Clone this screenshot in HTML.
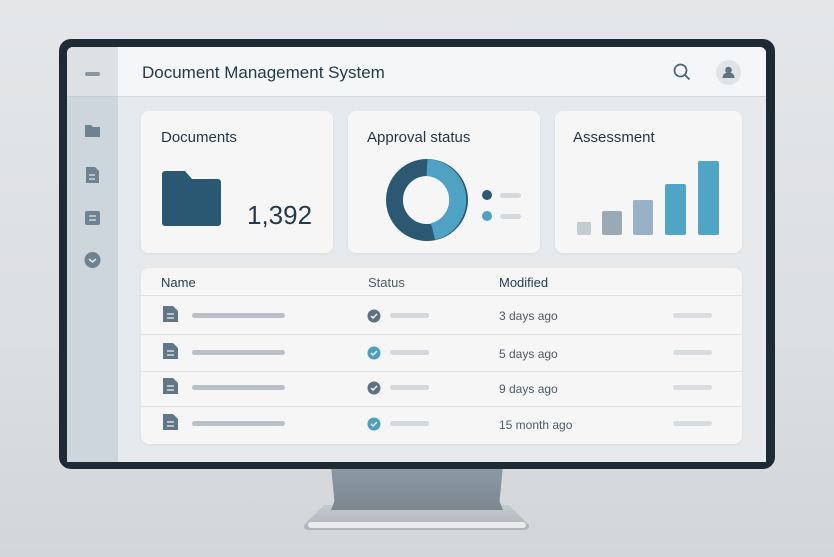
<!DOCTYPE html>
<html><head><meta charset="utf-8"><style>
*{margin:0;padding:0;box-sizing:border-box}
body{width:834px;height:557px;overflow:hidden;background:linear-gradient(180deg,#e4e6e8 0%,#dcdfe2 60%,#d3d6d9 100%);font-family:"Liberation Sans",sans-serif;position:relative}
.abs{position:absolute}
.bezel{left:59px;top:39px;width:716px;height:430px;background:#1e2b35;border-radius:12px}
.screen{left:67px;top:47px;width:699px;height:415px;background:#e7eaed;border-radius:6px 6px 0 0;overflow:hidden}
.side{left:0;top:0;width:51px;height:415px;background:#cdd6dc}
.sidetop{left:0;top:0;width:51px;height:50px;background:#dde1e4;border-bottom:1px solid #c7ced4}
.header{left:51px;top:0;width:648px;height:50px;background:#f5f6f7;border-bottom:1px solid #d3d8dc}
.card{background:#f6f6f7;border-radius:8px;box-shadow:0 1px 3px rgba(0,0,0,.06)}
.t{color:#1f3547;font-size:15px}
.row{left:0;width:601px;border-top:1px solid #dde2e6}
.bar{border-radius:3px;height:5px}
.txt{font-size:12px;color:#4a5a68}
</style></head><body>
<!-- stand -->
<div class="abs" style="left:304px;top:505px;width:225px;height:25px;background:linear-gradient(#c4c9ce,#aeb4ba);border-radius:10px 10px 4px 4px;clip-path:polygon(9% 0,91% 0,100% 80%,100% 100%,0 100%,0 80%)"></div>
<div class="abs" style="left:308px;top:522px;width:218px;height:6px;background:#e9ebed;border-radius:3px"></div>
<div class="abs" style="left:331px;top:466px;width:172px;height:44px;background:linear-gradient(#8f9ba4,#7a8791);clip-path:polygon(0 0,100% 0,98% 80%,100% 100%,0 100%,2% 80%)"></div>
<div class="abs bezel"></div>
<div class="abs screen">
 <div class="abs side"></div>
 <div class="abs sidetop"></div>
 <div class="abs" style="left:18px;top:25px;width:15px;height:4px;border-radius:2px;background:#8896a1"></div>
 <svg class="abs" style="left:17px;top:75px" width="18" height="200">
  <path d="M1 3h6l2 2h7v10H1z" fill="#6d8391"/>
  <path d="M2 45h9l4 4v12H2z" fill="#6d8391"/><path d="M5 53h6M5 57h6" stroke="#cdd6dc" stroke-width="1.4"/>
  <rect x="1" y="89" width="15" height="14" rx="2" fill="#6d8391"/><path d="M5 94h7M5 98h7" stroke="#cdd6dc" stroke-width="1.4"/>
  <circle cx="8.5" cy="138" r="8" fill="#6d8391"/><path d="M5 137l3.5 3 3.5-3" stroke="#dfe5e9" stroke-width="1.6" fill="none"/>
 </svg>
 <div class="abs header"></div>
 <div class="abs" style="left:75px;top:16px;font-size:17px;color:#223a4c">Document Management System</div>
 <svg class="abs" style="left:606px;top:16px" width="18" height="18"><circle cx="7.5" cy="7.5" r="6" stroke="#4b6474" stroke-width="1.7" fill="none"/><path d="M12 12l4.5 4.5" stroke="#4b6474" stroke-width="1.8"/></svg>
 <div class="abs" style="left:649px;top:13px;width:25px;height:25px;border-radius:50%;background:#e0e4e7"></div>
 <svg class="abs" style="left:649px;top:13px" width="25" height="25"><circle cx="12.5" cy="10" r="3.3" fill="#5e7483"/><path d="M6.5 18c0-4 2.7-5.5 6-5.5s6 1.5 6 5.5z" fill="#5e7483"/></svg>

 <div class="abs card" style="left:74px;top:64px;width:192px;height:142px"></div>
 <div class="abs t" style="left:94px;top:82px">Documents</div>
 <svg class="abs" style="left:95px;top:124px" width="60" height="56"><path d="M0 3a3 3 0 0 1 3-3h20l7 8h26a3 3 0 0 1 3 3v41a3 3 0 0 1-3 3H3a3 3 0 0 1-3-3z" fill="#2a5873"/></svg>
 <div class="abs" style="left:180px;top:153px;font-size:26px;color:#233a4b">1,392</div>

 <div class="abs card" style="left:281px;top:64px;width:192px;height:142px"></div>
 <div class="abs t" style="left:300px;top:82px">Approval status</div>
 <svg class="abs" style="left:316px;top:110px" width="90" height="90">
  <circle cx="44" cy="43" r="32.5" fill="none" stroke="#2c5873" stroke-width="17"/>
  <path d="M44 10.5A32.5 32.5 0 0 1 50 74.5" fill="none" stroke="#4ea2c3" stroke-width="17"/>
 </svg>
 <div class="abs" style="left:415px;top:143px;width:10px;height:10px;border-radius:50%;background:#2c5873"></div>
 <div class="abs bar" style="left:433px;top:146px;width:21px;background:#d4d9dd"></div>
 <div class="abs" style="left:415px;top:164px;width:10px;height:10px;border-radius:50%;background:#4ea2c3"></div>
 <div class="abs bar" style="left:433px;top:167px;width:21px;background:#d4d9dd"></div>

 <div class="abs card" style="left:488px;top:64px;width:187px;height:142px"></div>
 <div class="abs t" style="left:506px;top:82px">Assessment</div>
 <div class="abs" style="left:510px;top:175px;width:14px;height:13px;background:#c3ccd3;border-radius:2px"></div>
 <div class="abs" style="left:535px;top:164px;width:20px;height:24px;background:#9aa9b6;border-radius:2px"></div>
 <div class="abs" style="left:566px;top:153px;width:20px;height:35px;background:#98b1c4;border-radius:2px"></div>
 <div class="abs" style="left:598px;top:137px;width:21px;height:51px;background:#50a4c5;border-radius:2px"></div>
 <div class="abs" style="left:631px;top:114px;width:21px;height:74px;background:#50a4c5;border-radius:2px"></div>

 <div class="abs card" style="left:74px;top:221px;width:601px;height:176px">
  <div class="abs" style="left:20px;top:7px;font-size:13px;color:#1f3b50">Name</div>
  <div class="abs" style="left:227px;top:7px;font-size:13px;color:#4a5d6b">Status</div>
  <div class="abs" style="left:358px;top:7px;font-size:13px;color:#1f3b50">Modified</div>
  <div class="abs row" style="top:27px"></div>
  <div class="abs row" style="top:66px"></div>
  <div class="abs row" style="top:103px"></div>
  <div class="abs row" style="top:138px"></div>
 </div>
 <!-- rows -->
 <svg class="abs" style="left:96px;top:259px" width="16" height="160">
  <g fill="#5f7787"><path d="M0 0h10l5 5v11H0z"/><path d="M0 37h10l5 5v11H0z"/><path d="M0 72h10l5 5v11H0z"/><path d="M0 108h10l5 5v11H0z"/></g>
  <g stroke="#eef0f2" stroke-width="1.2"><path d="M4 8h7M4 12h7M4 45h7M4 49h7M4 80h7M4 84h7M4 116h7M4 120h7"/></g>
 </svg>
 <div class="abs bar" style="left:125px;top:266px;width:93px;background:#b9c0c7"></div>
 <div class="abs bar" style="left:125px;top:303px;width:93px;background:#b9c0c7"></div>
 <div class="abs bar" style="left:125px;top:338px;width:93px;background:#b9c0c7"></div>
 <div class="abs bar" style="left:125px;top:374px;width:93px;background:#b9c0c7"></div>
 <svg class="abs" style="left:300px;top:262px" width="14" height="130">
  <circle cx="7" cy="7" r="6.5" fill="#5e7180"/><circle cx="7" cy="44" r="6.5" fill="#4a9fc3"/><circle cx="7" cy="79" r="6.5" fill="#5e7180"/><circle cx="7" cy="115" r="6.5" fill="#4a9fc3"/>
  <g stroke="#fff" stroke-width="1.4" fill="none"><path d="M4 7l2 2 4-4M4 44l2 2 4-4M4 79l2 2 4-4M4 115l2 2 4-4"/></g>
 </svg>
 <div class="abs bar" style="left:323px;top:266px;width:39px;background:#d3d8dc"></div>
 <div class="abs bar" style="left:323px;top:303px;width:39px;background:#d3d8dc"></div>
 <div class="abs bar" style="left:323px;top:338px;width:39px;background:#d3d8dc"></div>
 <div class="abs bar" style="left:323px;top:374px;width:39px;background:#d3d8dc"></div>
 <div class="abs txt" style="left:432px;top:262px">3 days ago</div>
 <div class="abs txt" style="left:432px;top:300px">5 days ago</div>
 <div class="abs txt" style="left:432px;top:335px">9 days ago</div>
 <div class="abs txt" style="left:432px;top:371px">15 month ago</div>
 <div class="abs bar" style="left:606px;top:266px;width:39px;background:#d9dde1"></div>
 <div class="abs bar" style="left:606px;top:303px;width:39px;background:#d9dde1"></div>
 <div class="abs bar" style="left:606px;top:338px;width:39px;background:#d9dde1"></div>
 <div class="abs bar" style="left:606px;top:374px;width:39px;background:#d9dde1"></div>
</div>
</body></html>
